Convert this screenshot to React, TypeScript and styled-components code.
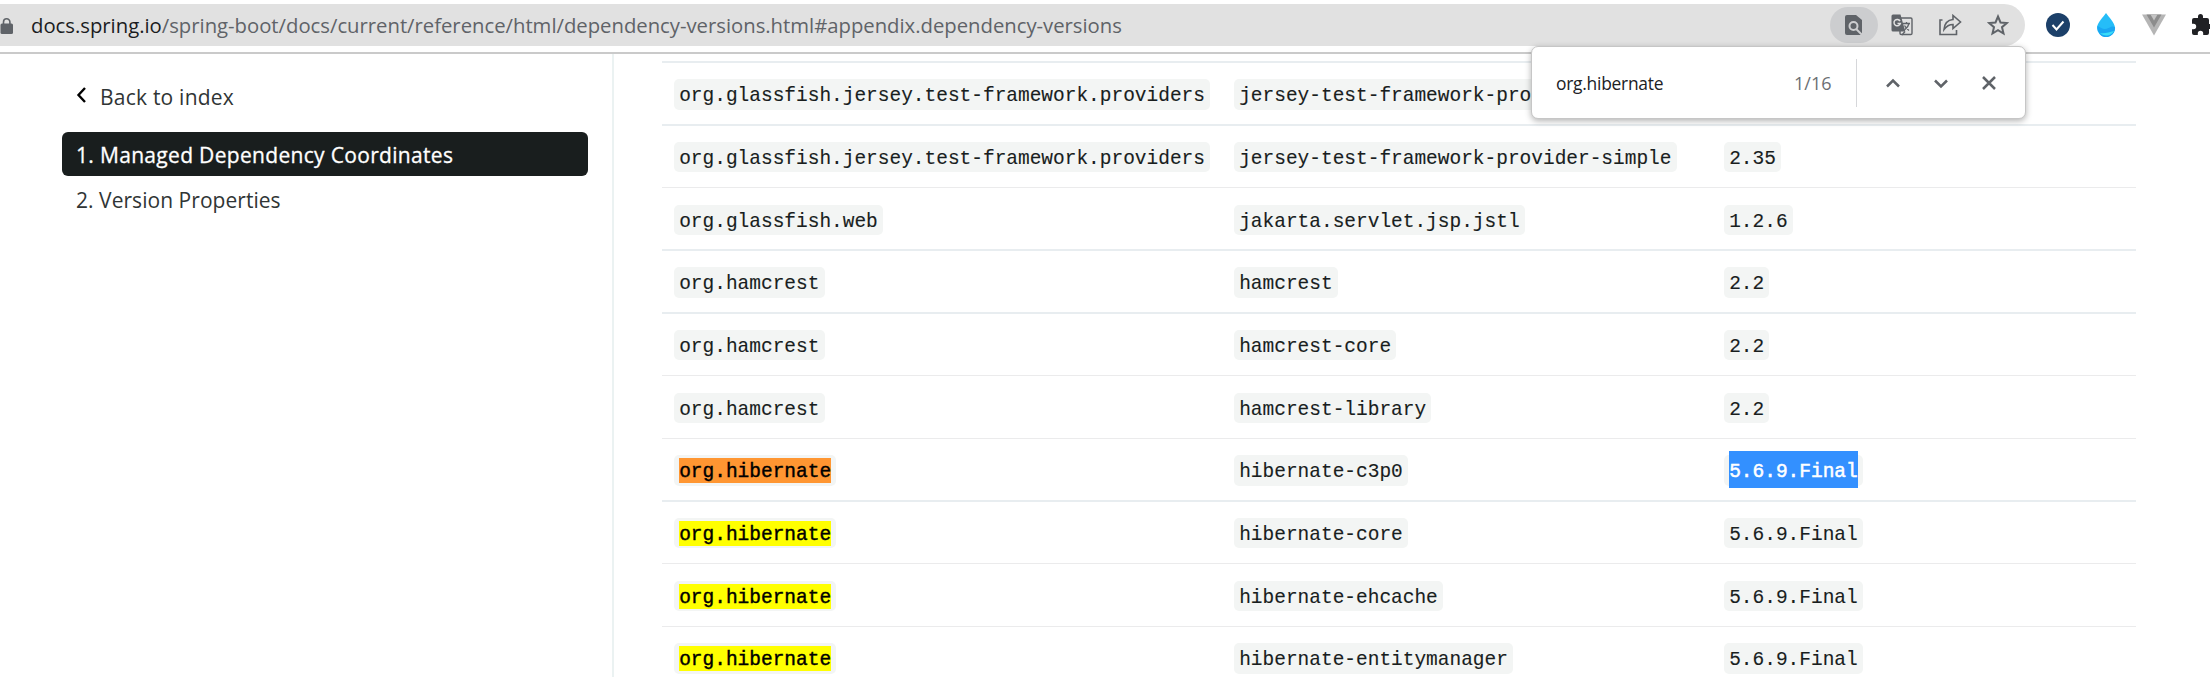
import React from "react";
import styled, { createGlobalStyle, css } from "styled-components";

const GlobalStyle = createGlobalStyle`
  * { box-sizing: border-box; }
  body { margin: 0; background: #fff; overflow: hidden; }
`;

const uiFont = css`font-family: "Open Sans", "Noto Sans", sans-serif;`;

const Page = styled.div`
  position: relative;
  width: 2210px;
  height: 677px;
  overflow: hidden;
  display: flex;
  flex-direction: column;
  background: #fff;
`;

const Toolbar = styled.header`
  display: flex;
  align-items: center;
  height: 54px;
  padding: 4px 0 6px;
  border-bottom: 2px solid #cacaca;
  flex: none;
`;

const AddressBar = styled.div`
  display: flex;
  align-items: center;
  width: 2025px;
  height: 42px;
  flex: none;
  background: #e1e1e1;
  border-radius: 0 21px 21px 0;
`;

const Lock = styled.svg`
  flex: none;
  width: 14px;
  height: 18px;
  margin: 1px 17px 0 0;
`;

const Url = styled.div`
  ${uiFont}
  flex: 1;
  font-size: 20.3px;
  line-height: 40px;
  letter-spacing: -0.01px;
  white-space: nowrap;
  color: #5f6368;
`;

const Host = styled.span`
  color: #1b1c1e;
`;

const Actions = styled.div`
  display: flex;
  margin-right: 3px;
`;

const Action = styled.span<{ $active?: boolean }>`
  display: flex;
  align-items: center;
  justify-content: center;
  width: 48px;
  height: 36px;
  border-radius: 18px;
  background: ${(p) => (p.$active ? "#cccdcf" : "transparent")};
`;

const Extensions = styled.div`
  display: flex;
  flex: none;
  margin-left: 9px;
`;

const Extension = styled.span`
  display: flex;
  align-items: center;
  justify-content: center;
  flex: none;
  width: 48px;
  height: 36px;
`;

const Content = styled.div`
  display: flex;
  flex: 1;
  min-height: 0;
`;

const Sidebar = styled.nav`
  ${uiFont}
  width: 614px;
  flex: none;
  padding: 20px 24px 0 62px;
  border-right: 2px solid #ebf2f2;
  font-size: 21px;
  color: #303535;
`;

const BackLink = styled.a`
  display: flex;
  align-items: center;
  height: 46px;
  padding-left: 14px;
  letter-spacing: 0.22px;
`;

const BackIcon = styled.svg`
  width: 11px;
  height: 18px;
  margin: 0 13px 4px 0;
`;

const TocItem = styled.a<{ $active?: boolean }>`
  display: flex;
  align-items: center;
  height: 44px;
  margin-top: ${(p) => (p.$active ? "12px" : "1px")};
  padding: 2px 0 0 14px;
  border-radius: 6px;
  background: ${(p) => (p.$active ? "#191e1e" : "transparent")};
  color: ${(p) => (p.$active ? "#fff" : "#303535")};
  -webkit-text-stroke: ${(p) => (p.$active ? "0.3px #fff" : "0")};
  letter-spacing: ${(p) => (p.$active ? 0.32 : 0.04)}px;
  white-space: nowrap;
`;

const Table = styled.main`
  width: 1474px;
  margin: 7px 0 0 48px;
`;

const Row = styled.div<{ $height: number; $thick: boolean; $tall: boolean }>`
  display: grid;
  grid-template-columns: 560px 490px 1fr;
  align-items: start;
  height: ${(p) => p.$height}px;
  padding: ${(p) => (p.$thick || p.$tall ? 16 : 17)}px 0 0 12px;
  border-top: ${(p) => (p.$thick ? "2px solid #e8edf0" : "1px solid #ebebec")};
`;

const Chip = styled.code<{ $tall: boolean }>`
  justify-self: start;
  height: ${(p) => (p.$tall ? 31 : 30)}px;
  padding: 0 5.2px;
  border-radius: 5px;
  background: #f3f5f4;
  color: #191e1e;
  font: 19.48px/35px "Liberation Mono", monospace;
  -webkit-text-stroke: 0.12px currentColor;
  white-space: pre;
`;

const Match = styled.mark<{ $current: boolean }>`
  display: block;
  height: 25px;
  margin-top: 3px;
  line-height: 29px;
  background: ${(p) => (p.$current ? "#ff9632" : "#ffff00")};
  color: #000;
  -webkit-text-stroke-width: 0.4px;
`;

const Selected = styled.span`
  display: block;
  height: 37px;
  margin-top: -4px;
  line-height: 43px;
  background: #3390ff;
  color: #fff;
  -webkit-text-stroke-width: 0.5px;
`;

const FindBar = styled.aside`
  ${uiFont}
  position: absolute;
  left: 1531px;
  top: 46px;
  width: 495px;
  height: 73px;
  display: flex;
  align-items: center;
  padding-left: 24px;
  border: 1px solid #c6c6c6;
  border-radius: 7px;
  background: #fff;
  box-shadow: 0 2px 6px rgba(0, 0, 0, 0.3);
  font-size: 18px;
`;

const Query = styled.span`
  width: 238px;
  font-size: 17.4px;
  letter-spacing: -0.25px;
  color: #202124;
`;

const Count = styled.span`
  width: 62px;
  color: #6b6f74;
`;

const Divider = styled.i`
  width: 1px;
  height: 48px;
  margin-right: 12px;
  background: #d6d7da;
`;

const FindButton = styled.span`
  display: flex;
  align-items: center;
  justify-content: center;
  width: 48px;
  height: 36px;
`;

type Entry = {
  group: string;
  artifact: string;
  version?: string;
  height: number;
  thick?: boolean;
  tall?: boolean;
};

const entries: Entry[] = [
  { group: "org.glassfish.jersey.test-framework.providers", artifact: "jersey-test-framework-pro", height: 63, thick: true, tall: true },
  { group: "org.glassfish.jersey.test-framework.providers", artifact: "jersey-test-framework-provider-simple", version: "2.35", height: 63, thick: true },
  { group: "org.glassfish.web", artifact: "jakarta.servlet.jsp.jstl", version: "1.2.6", height: 62 },
  { group: "org.hamcrest", artifact: "hamcrest", version: "2.2", height: 63, thick: true, tall: true },
  { group: "org.hamcrest", artifact: "hamcrest-core", version: "2.2", height: 63, thick: true },
  { group: "org.hamcrest", artifact: "hamcrest-library", version: "2.2", height: 63 },
  { group: "org.hibernate", artifact: "hibernate-c3p0", version: "5.6.9.Final", height: 62, tall: true },
  { group: "org.hibernate", artifact: "hibernate-core", version: "5.6.9.Final", height: 63, thick: true },
  { group: "org.hibernate", artifact: "hibernate-ehcache", version: "5.6.9.Final", height: 63 },
  { group: "org.hibernate", artifact: "hibernate-entitymanager", version: "5.6.9.Final", height: 62, tall: true },
];

const query = "org.hibernate";
const current = entries.findIndex((e) => e.group === query);

export default function App() {
  return (
    <Page>
      <GlobalStyle />
      <Toolbar>
        <AddressBar>
          <Lock viewBox="0 0 14 18">
            <path d="M3.500 8V5a3.200 3.200 0 0 1 6.400 0v3" fill="none" stroke="#5f6368" strokeWidth="1.600" />
            <rect x="0.500" y="6.500" width="12.500" height="10.500" rx="1.500" fill="#5f6368" />
          </Lock>
          <Url>
            <Host>docs.spring.io</Host>/spring-boot/docs/current/reference/html/dependency-versions.html#appendix.dependency-versions
          </Url>
          <Actions>
            <Action $active>
              <svg width="18" height="20" viewBox="0 0 18 20">
                <path d="M2 0h9l6 5v13a2 2 0 0 1-2 2H2a2 2 0 0 1-2-2V2a2 2 0 0 1 2-2z" fill="#5f6368" />
                <circle cx="8.500" cy="11" r="4" fill="none" stroke="#cccdcf" strokeWidth="2" />
                <path d="M11.200 14l6 6" stroke="#cccdcf" strokeWidth="2" />
              </svg>
            </Action>
            <Action>
              <svg width="22" height="22" viewBox="0 0 22 22">
                <rect x="9" y="4" width="12" height="16.500" rx="1.200" fill="none" stroke="#5f6368" strokeWidth="1.400" />
                <path d="M2 .5h7.500l4.800 17H2a1.500 1.500 0 0 1-1.500-1.500V2A1.500 1.500 0 0 1 2 .5z" fill="#5f6368" />
                <path d="M9 7A3.200 3.200 0 1 0 9.300 9.500H6.500" fill="none" stroke="#e1e1e1" strokeWidth="1.500" />
                <path d="M12 9.500h7M15.500 8v1.500M18 9.500c-.6 3-2.500 5-4.500 6.500M13.500 11.500c1 2 2.500 3.500 4.500 5M11 21l3-3.500" fill="none" stroke="#5f6368" strokeWidth="1.300" />
              </svg>
            </Action>
            <Action>
              <svg width="24" height="22" viewBox="0 0 24 22" fill="none" stroke="#5f6368" strokeWidth="1.600">
                <path d="M4.500 6H2v14.500h16.500V16" />
                <path d="M6 15.500c.5-6 3.500-9.500 9-10V1.500l7.500 6.500L15 14.500v-4c-4 0-6.500 1.500-9 5z" strokeLinejoin="miter" />
              </svg>
            </Action>
            <Action>
              <svg width="22" height="22" viewBox="0 0 22 22">
                <path d="M11 2.500l2.500 6 6.400.5-4.900 4.200 1.500 6.300-5.500-3.400-5.500 3.400L7 13.200 2.100 9l6.400-.5z" fill="none" stroke="#5f6368" strokeWidth="2" />
              </svg>
            </Action>
          </Actions>
        </AddressBar>
        <Extensions>
          <Extension>
            <svg width="24" height="24" viewBox="0 0 24 24">
              <circle cx="12" cy="12" r="12" fill="#1c4069" />
              <path d="M6.500 12l4 4.500L17.500 8.500" fill="none" stroke="#fff" strokeWidth="2" />
            </svg>
          </Extension>
          <Extension>
            <svg width="20" height="24" viewBox="0 0 20 24">
              <path d="M10 0c2.500 4 9 9.500 9 15a9 9 0 0 1-18 0C1 9.500 7.500 4 10 0z" fill="#25bdf8" />
              <path d="M1.500 13c4 2 6.500 4.500 11 2 2.500-1.500 4.500-2 6.500-1a9 9 0 0 1-14 8.500C3 20 1 17 1.500 13z" fill="#1aa6f2" />
              <path d="M4 20c5 1 9-1 14-2a9 9 0 0 1-14 2z" fill="#38dcf8" />
            </svg>
          </Extension>
          <Extension>
            <svg width="24" height="22" viewBox="0 0 24 22">
              <path d="M0 .5h24L12 21.500z" fill="#b5b5b5" />
              <path d="M4.500.5h15L12 13.500z" fill="#8c8c8c" />
              <path d="M8.500.5h7L12 6.500z" fill="#c4c4c4" />
            </svg>
          </Extension>
          <Extension>
            <svg width="24" height="24" viewBox="0 0 24 24">
              <path d="M20.500 11H19V7a2 2 0 0 0-2-2h-4V3.500a2.500 2.500 0 0 0-5 0V5H4a2 2 0 0 0-2 2v3.800h1.500a2.700 2.700 0 0 1 0 5.400H2V20a2 2 0 0 0 2 2h3.800v-1.500a2.700 2.700 0 0 1 5.400 0V22H17a2 2 0 0 0 2-2v-4h1.500a2.500 2.500 0 0 0 0-5z" fill="#202124" />
            </svg>
          </Extension>
        </Extensions>
      </Toolbar>
      <Content>
        <Sidebar>
          <BackLink>
            <BackIcon viewBox="0 0 11 18">
              <path d="M9 2L2.500 9 9 16" fill="none" stroke="#000" strokeWidth="2.400" />
            </BackIcon>
            Back to index
          </BackLink>
          <TocItem $active>1. Managed Dependency Coordinates</TocItem>
          <TocItem>2. Version Properties</TocItem>
        </Sidebar>
        <Table>
          {entries.map((e, i) => (
            <Row key={e.artifact} $height={e.height} $thick={!!e.thick} $tall={!!e.tall}>
              <Chip $tall={!!e.tall}>
                {e.group === query ? <Match $current={i === current}>{e.group}</Match> : e.group}
              </Chip>
              <Chip $tall={!!e.tall}>{e.artifact}</Chip>
              {e.version && (
                <Chip $tall={!!e.tall}>{i === current ? <Selected>{e.version}</Selected> : e.version}</Chip>
              )}
            </Row>
          ))}
        </Table>
      </Content>
      <FindBar>
        <Query>org.hibernate</Query>
        <Count>1/16</Count>
        <Divider />
        <FindButton>
          <svg width="16" height="16" viewBox="0 0 16 16"><path d="M2 11.500l6-6 6 6" fill="none" stroke="#5f6368" strokeWidth="2.500" /></svg>
        </FindButton>
        <FindButton>
          <svg width="16" height="16" viewBox="0 0 16 16"><path d="M2 5.500l6 6 6-6" fill="none" stroke="#5f6368" strokeWidth="2.500" /></svg>
        </FindButton>
        <FindButton>
          <svg width="16" height="16" viewBox="0 0 16 16"><path d="M2 2l12 12M14 2L2 14" fill="none" stroke="#5f6368" strokeWidth="2.500" /></svg>
        </FindButton>
      </FindBar>
    </Page>
  );
}
